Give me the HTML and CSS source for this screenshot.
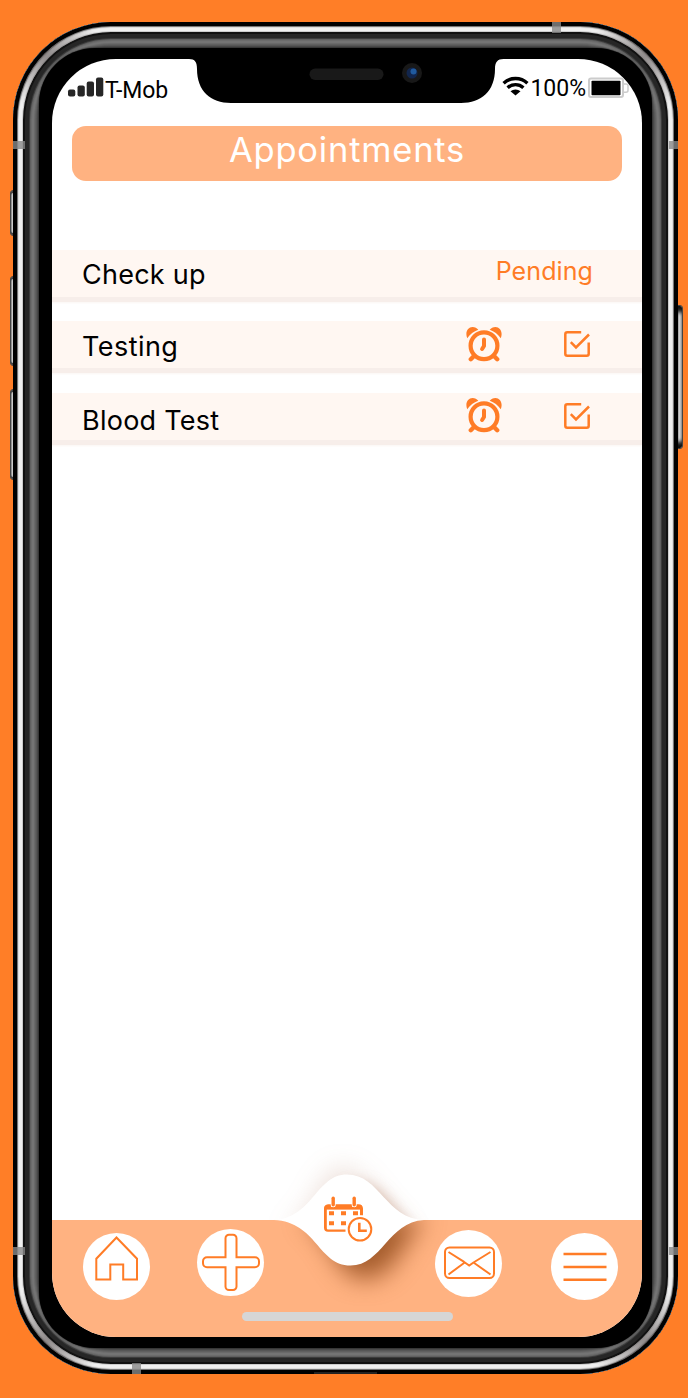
FILE: index.html
```html
<!DOCTYPE html>
<html lang="en">
<head>
<meta charset="utf-8">
<title>Appointments</title>
<link rel="stylesheet" href="styles.css">
</head>
<body>
<svg class="defs" width="0" height="0" aria-hidden="true">
  <symbol id="alarm" viewBox="0 0 36 36">
    <path d="M1.200 12.200C-1.200 6 2 1 6.500 1c2.400 0 4.600 1.200 5.800 2.800C7.800 5.300 4 8.300 1.200 12.200zM34.800 12.200C37.200 6 34 1 29.500 1c-2.400 0-4.600 1.200-5.800 2.800C28.200 5.300 32 8.300 34.800 12.200z" fill="currentColor"/>
    <circle cx="18" cy="19.700" r="13.400" fill="none" stroke="currentColor" stroke-width="4.200"/>
    <path d="M8 30l-3.200 3.200M28 30l3.200 3.200" stroke="currentColor" stroke-width="4.400" stroke-linecap="round"/>
    <path d="M18 13.500v6.500l-1.900 3" fill="none" stroke="currentColor" stroke-width="4" stroke-linecap="round" stroke-linejoin="round"/>
  </symbol>
  <symbol id="check" viewBox="0 0 28 28">
    <path d="M18.200 2.300H4.300a2 2 0 0 0-2 2v19.400a2 2 0 0 0 2 2h19.400a2 2 0 0 0 2-2V12.500M7.800 12.200l5.200 5.300L26 4.500" fill="none" stroke="currentColor" stroke-width="2.500"/>
  </symbol>
</svg>
<div class="phone">
  <i class="key key-mute"></i><i class="key key-up"></i><i class="key key-down"></i><i class="key key-power"></i>
  <div class="rim">
    <div class="glass">
      <main class="screen">
        <header class="status">
          <div class="carrier">
            <svg width="36" height="20" viewBox="0 0 36 20" fill="#262626"><rect x="0" y="12.500" width="7.300" height="7" rx="2"/><rect x="9.500" y="8.500" width="7.300" height="11" rx="2"/><rect x="18.700" y="4.500" width="7.300" height="15" rx="2"/><rect x="28" y="0.500" width="7.300" height="19" rx="2"/></svg>
            <span class="carrier-name">T-Mob</span>
          </div>
          <div class="power">
            <svg class="wifi" width="27" height="20" viewBox="0 0 27 20" fill="none" stroke="#000" stroke-width="3.400"><path d="M1.600 6.200a17.500 17.500 0 0 1 23.800 0M5.600 10.700a11.800 11.800 0 0 1 15.800 0"/><path d="M13.500 18.500l-5-4.200a7.500 7.500 0 0 1 10 0z" fill="#000" stroke="none"/></svg>
            <span class="percent">100%</span>
            <svg class="battery" width="41" height="22" viewBox="0 0 41 22"><rect x="1" y="1.600" width="34" height="18.300" rx="2" fill="#fff" stroke="#ccc" stroke-width="2"/><path d="M36 7h2a2 2 0 0 1 2 2v4.200a2 2 0 0 1-2 2h-2" fill="none" stroke="#ccc" stroke-width="1.500"/><rect x="3.500" y="3.700" width="29" height="14.600" rx=".8"/></svg>
          </div>
        </header>
        <h1 class="title"><span class="title-text">Appointments</span></h1>
        <section class="list">
          <div class="row"><span class="name name-check">Check up</span><span class="pending">Pending</span></div>
          <div class="row"><span class="name name-testing">Testing</span><span class="actions"><svg class="alarm"><use href="#alarm"/></svg><svg class="check"><use href="#check"/></svg></span></div>
          <div class="row"><span class="name name-blood">Blood Test</span><span class="actions"><svg class="alarm"><use href="#alarm"/></svg><svg class="check"><use href="#check"/></svg></span></div>
        </section>
        <nav class="nav">
          <div class="tabs">
            <a class="tab tab-home"><svg width="67" height="67" viewBox="0 0 67 67"><path d="M33.500 4.500L54 25.700V46.500H40.200V31.500H27.300V46.500H13.300V25.700z"/></svg></a>
            <a class="tab tab-add"><svg width="67" height="67" viewBox="0 0 67 67"><path d="M32 5.700h4a3.500 3.500 0 0 1 3.500 3.500v19H58a4 4 0 0 1 4 4v2a4 4 0 0 1-4 4H39.500v19.300a3.500 3.500 0 0 1-3.500 3.500h-4a3.500 3.500 0 0 1-3.500-3.500V38.200H10a4 4 0 0 1-4-4v-2a4 4 0 0 1 4-4h18.500v-19A3.500 3.500 0 0 1 32 5.700z"/></svg></a>
            <a class="tab tab-mail"><svg width="67" height="67" viewBox="0 0 67 67"><rect x="10" y="17.500" width="49" height="30.500" rx="4.500"/><path d="M13.500 22l16 10.200M55.500 22L38.500 32.500M29.500 32.200l4.700 3.300 4.300-3M13.500 44.500l16.200-12M55.500 44.500L38.500 32.500"/></svg></a>
            <a class="tab tab-menu"><svg width="67" height="67" viewBox="0 0 67 67"><path class="bars" d="M12.500 21h43M12.500 34h43M12.500 46.700h43"/></svg></a>
          </div>
          <div class="home-bar"></div>
          <svg class="current" width="152" height="100" viewBox="0 0 152 100">
            <defs><clipPath id="upper"><path d="M-100-100h360V48h-360z"/></clipPath><clipPath id="lower"><path d="M-100 48h360v120h-360z"/></clipPath></defs>
            <g clip-path="url(#upper)"><path class="soft" d="M8 60C43 46 44-4 68-4S112 48 140 60z"/></g>
            <g clip-path="url(#lower)"><path class="deep" d="M20 40C54 55 55 101 84 101c34 0 40-44 62-61z"/></g>
            <g clip-path="url(#upper)"><path class="side" d="M40 60C56 43 63 14 86 14s31 29 59 46z"/></g>
            <path fill="#fff" d="M0 48C39 46 42 2.500 73 2.500 106 2.500 112 47 150 48 114 50 108 93.500 76.500 93.500 44 93.500 43 50 0 48z"/>
            <g transform="translate(-2 -.8)">
              <g fill="#ff7c26"><path fill-rule="evenodd" d="M52 37.300a4.500 4.500 0 0 1 4-4.300h3v4h4v-4h17v4h4v-4h2.500a4.500 4.500 0 0 1 4.500 4.300V44h-3v-6H54.800v19a1.200 1.200 0 0 0 1.200 1.200h17.500v2.300H56a4 4 0 0 1-4-4z"/><path d="M52.500 35.500h37.300v2.800H52.500zM57 40h5v4h-5zM69 40h5v4h-5zM81 40h5v4h-5zM57 50h5v4h-5zM69 50h5v4h-5z"/><g stroke="#fff" stroke-width="1.600" paint-order="stroke"><rect x="59.500" y="25.300" width="3.400" height="10" rx="1.700"/><rect x="80.500" y="25.300" width="3.400" height="10" rx="1.700"/></g></g>
              <circle cx="88" cy="58" r="13.500" fill="#fff"/><circle cx="88" cy="58" r="11.300" fill="#fff" stroke="#ff7c26" stroke-width="2"/><path d="M87.300 51.500v8h7.500" fill="none" stroke="#ff7c26" stroke-width="2.600"/>
            </g>
          </svg>
        </nav>
      </main>
    </div>
    <svg class="notch" width="322" height="50" viewBox="0 0 322 50">
      <path d="M0 0v5h4c6 0 8 3 8 10C12 37 25.500 49 46 49h230c20.500 0 34-12 34-34 0-7 2.500-10 8.500-10h3.500V0z"/>
      <rect x="124.500" y="14.500" width="74" height="11.500" rx="5.700" fill="#191919"/>
      <circle cx="227" cy="19" r="10" fill="#181818"/><circle cx="227" cy="19" r="5.500" fill="#12264d"/><circle cx="228.500" cy="17.500" r="3" fill="#205a9e"/>
    </svg>
  </div>
  <i class="band band-top"></i><i class="band band-bottom"></i>
  <i class="band band-left"></i><i class="band band-right"></i><i class="band band-left band-low"></i><i class="band band-right band-low"></i>
  <i class="port"></i>
</div>
</body>
</html>
```
FILE: styles.css
```css
* { box-sizing: border-box; }
body { margin: 0; height: 1398px; padding: 22px 10px 24px 13px; background: #ff7e27; font-family: Roboto, "Liberation Sans", sans-serif; overflow: hidden; }
svg { display: block; flex: none; overflow: visible; }
.defs { position: absolute; }
.phone { position: relative; width: 665px; height: 1352px; }

/* metal rim, drawn as concentric rings */
.rim {
  position: relative; height: 100%; padding: 26px; border-radius: 98px; background: #000;
  box-shadow:
    inset 0 0 0 4px #000, inset 0 0 0 5px #777, inset 0 0 0 6px #ddd, inset 0 0 0 9px #f0f0f0, inset 0 0 0 10px #ccc,
    inset 0 0 0 12px #111, inset 0 0 0 16px #262626,
    inset 0 0 0 17px #3c3c3c, inset 0 0 0 18px #606060, inset 0 0 0 19px #6c6c6c, inset 0 0 0 21px #747474, inset 0 0 0 22px #6a6a6a,
    inset 0 0 0 23px #606060, inset 0 0 0 24px #565656, inset 0 0 0 25px #4c4c4c, inset 0 0 0 36px #444;
}
.rim::before {
  content: ""; position: absolute; inset: 4px; border-radius: 94px; padding: 6px;
  background:
    radial-gradient(circle at 28px 28px, #5c5555aa, transparent 55px),
    radial-gradient(circle at 629px 28px, #5c5555aa, transparent 55px),
    radial-gradient(circle at 28px 1316px, #5c5555aa, transparent 55px),
    radial-gradient(circle at 629px 1316px, #5c5555aa, transparent 55px);
  mask: linear-gradient(#000 0 0) content-box exclude, linear-gradient(#000 0 0);
}
.glass { height: 100%; padding: 11px 10px 11px 13px; border-radius: 56px; background: #000; box-shadow: 0 0 2px #111; }
.screen { position: relative; display: flex; flex-direction: column; width: 590px; height: 1278px; border-radius: 64px; background: #fff; overflow: hidden; }
.notch { position: absolute; left: 172px; top: 32px; }

.key { position: absolute; left: -3px; width: 6px; border-radius: 3px 0 0 3px; border: 1px solid #444; background: linear-gradient(90deg, #999, #ddd 50%, #bbb); box-shadow: inset 0 2px 1px #333, inset 0 -2px 1px #333; }
.key-mute { top: 168px; height: 46px; }
.key-up { top: 254px; height: 90px; }
.key-down { top: 367px; height: 91px; }
.key-power { left: 663px; width: 7px; top: 283px; height: 144px; border-radius: 0 3px 3px 0; box-shadow: inset 0 8px 4px -2px #111, inset 0 -8px 4px -2px #111; }
.band { position: absolute; background: #888c; }
.band-top { left: 539px; top: 0; width: 9px; height: 11px; }
.band-bottom { left: 119px; bottom: 0; width: 9px; height: 11px; }
.band-left { left: 0; top: 119px; width: 12px; height: 8px; }
.band-right { right: 0; top: 119px; width: 9px; height: 8px; }
.band-low { top: 1225px; }
.port { position: absolute; left: 301px; bottom: 0; width: 63px; height: 2px; background: #222; }

.status { display: flex; justify-content: space-between; height: 67px; padding: 17px 13px 0 16px; font-size: 23px; line-height: 27px; }
.carrier, .power { display: flex; align-items: flex-start; }
.carrier svg { margin-top: 1px; margin-right: 1px; }
.carrier-name { margin-top: 1px; letter-spacing: -.1px; }
.wifi { margin-top: .5px; }
.percent { margin-top: -1px; margin-left: 1px; }
.battery { margin: 1px 0 0 2px; }

.title { margin: 0 20px; height: 55px; border-radius: 14px; background: #ffb281; color: #fff; font-family: Inter, sans-serif; font-weight: 400; font-size: 34.500px; line-height: 47px; text-align: center; letter-spacing: .8px; }
.list { display: grid; gap: 24.300px; margin-top: 69px; font-family: Inter, sans-serif; }
.row { display: flex; justify-content: space-between; height: 47px; padding: 0 49px 0 30px; background: #fff7f2; box-shadow: 0 5px 0 #f7eeea, 0 6px 2px #fbf6f3; }
.name { font-size: 27px; line-height: 50px; letter-spacing: .25px; white-space: nowrap; }
.name-testing { line-height: 51px; letter-spacing: .45px; }
.name-blood { line-height: 56px; }
.pending { font-size: 25px; line-height: 42px; color: #ff7c26; letter-spacing: .1px; }
.actions { display: flex; gap: 61px; color: #ff7c26; padding-right: 2px; }
.alarm { width: 36px; height: 36px; margin-top: 4.500px; }
.check { width: 28px; height: 28px; margin-top: 9px; }

.nav { position: relative; height: 117px; margin-top: auto; background: #ffb281; }
.tabs { display: flex; padding: 9px 24px 0 31px; }
.tab { width: 67px; height: 67px; border-radius: 50%; background: #fff; }
.tab svg { fill: none; stroke: #ff7c26; stroke-width: 2; }
.tab .bars { stroke-width: 2.600; }
.tab-home { margin-top: 4px; }
.tab-add { margin-left: 47px; }
.tab-mail { margin: 1px 0 0 171px; }
.tab-menu { margin: 4px 0 0 49px; }
.home-bar { width: 211px; height: 9px; margin: 12px 0 0 190px; border-radius: 5px; background: #d6d6d6; }
.current { position: absolute; left: 222px; top: -48px; }
.soft { fill: #a05a3830; filter: blur(13px); }
.deep { fill: #823b0cb8; filter: blur(12px); transform: translate(6px, 6px); }
.side { fill: #a5603c80; filter: blur(8px); }
```
